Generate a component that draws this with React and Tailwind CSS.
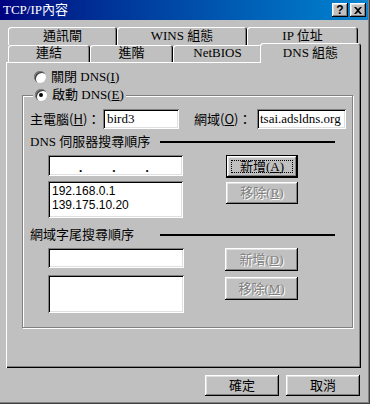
import React from 'react'

const raised = 'shadow-[inset_-1px_-1px_#000,inset_1px_1px_#fff,inset_-2px_-2px_#808080,inset_2px_2px_#dfdfdf]'
const sunken = 'shadow-[inset_1px_1px_#808080,inset_-1px_-1px_#fff,inset_2px_2px_#000,inset_-2px_-2px_#dfdfdf]'
const tabShadow = 'shadow-[inset_1px_1px_#fff,inset_-1px_0_#000,inset_-2px_0_#808080]'

function Tab({ w, children }) {
  return (
    <div className={`h-[17px] ${w} ${tabShadow} rounded-t-[3px] flex items-center justify-center pb-[1px]`}>
      {children}
    </div>
  )
}

function Radio({ checked }) {
  return (
    <div className="w-[12px] h-[12px] rounded-full bg-white shadow-[inset_1px_1px_#808080,inset_2px_2px_#404040] flex items-center justify-center">
      {checked && <div className="w-[4px] h-[4px] rounded-full bg-black" />}
    </div>
  )
}

function Btn({ children, disabled, isDefault, className = '' }) {
  if (isDefault) {
    return (
      <div className={`border border-black ${className}`}>
        <div className={`h-full ${raised} flex items-center justify-center p-[4px]`}>
          <div className="w-full h-full border border-dotted border-black flex items-center justify-center">
            {children}
          </div>
        </div>
      </div>
    )
  }
  return (
    <div
      className={`${raised} flex items-center justify-center ${
        disabled ? 'text-[#808080] [text-shadow:1px_1px_#fff]' : 'text-black'
      } ${className}`}
    >
      {children}
    </div>
  )
}

function SectionHeading({ children }) {
  return (
    <div className="flex items-center h-[14px] pl-[7px]">
      <span className="w-[130px]">{children}</span>
      <div className="w-[175px] h-[2px] bg-black" />
    </div>
  )
}

export default function App() {
  return (
    <div className="w-[370px] h-[404px] bg-[#c0c0c0] font-['Liberation_Serif','Noto_Sans_CJK_TC',serif] text-[13px] leading-[14px] text-black shadow-[inset_-1px_-1px_#404040,inset_-2px_-2px_#808080] overflow-hidden">
      {/* title bar */}
      <div className="w-[368px] h-[20px] bg-gradient-to-r from-[#000080] to-[#1084d0] flex items-center justify-between pl-[3px] pr-[2px]">
        <span className="text-white">TCP/IP內容</span>
        <div className="flex gap-[2px]">
          <div className={`w-[16px] h-[14px] bg-[#c0c0c0] ${raised} flex items-center justify-center font-['Liberation_Sans',sans-serif] font-bold text-[12px]`}>?</div>
          <div className={`w-[16px] h-[14px] bg-[#c0c0c0] ${raised} flex items-center justify-center`}>
            <svg width="8" height="7" viewBox="0 0 8 7">
              <path d="M0 0h2l2 2 2-2h2L5 3.5 8 7H6L4 5 2 7H0l3-3.5z" fill="#000" />
            </svg>
          </div>
        </div>
      </div>

      {/* tabs */}
      <div className="pl-[8px] mt-[7px]">
        <div className="flex">
          <Tab w="w-[109px] h-[18px]">通訊閘</Tab>
          <Tab w="w-[130px] h-[18px]">WINS 組態</Tab>
          <Tab w="w-[111px] h-[18px]">IP 位址</Tab>
        </div>
        <div className="flex items-start h-[17px]">
          <Tab w="w-[82px]">連結</Tab>
          <Tab w="w-[83px]">進階</Tab>
          <Tab w="w-[89px]">NetBIOS</Tab>
          <div className={`relative z-10 -ml-[2px] -mt-[2px] w-[101px] h-[20px] bg-[#c0c0c0] rounded-t-[3px] ${tabShadow} flex justify-center pt-[3px]`}>
            DNS 組態
          </div>
        </div>
      </div>

      {/* panel */}
      <div className="ml-[6px] w-[355px] h-[306px] shadow-[inset_1px_1px_#fff,inset_-1px_-1px_#000,inset_-2px_-2px_#808080] pt-[8px]">
        <div className="flex items-center gap-[5px] ml-[28px] h-[14px]">
          <Radio />
          <span>關閉 DNS(<u>I</u>)</span>
        </div>

        <div className="ml-[16px] mt-[11px] w-[331px] h-[233px] border border-[#808080] shadow-[inset_1px_1px_#fff,1px_1px_#fff]">
          <div className="flex items-center gap-[5px] -mt-[8px] ml-[10px] px-[2px] w-fit h-[14px] bg-[#c0c0c0]">
            <Radio checked />
            <span>啟動 DNS(<u>E</u>)</span>
          </div>

          <div className="flex items-center mt-[7px] pl-[7px]">
            <span className="w-[73px] font-['Noto_Sans_CJK_TC',sans-serif]">主電腦(<u>H</u>)：</span>
            <div className={`w-[76px] h-[20px] bg-white ${sunken} flex items-center pl-[4px]`}>bird3</div>
            <span className="ml-[15px] w-[63px] font-['Noto_Sans_CJK_TC',sans-serif]">網域(<u>O</u>)：</span>
            <div className={`w-[89px] h-[20px] bg-white ${sunken} flex items-center pl-[3px]`}>tsai.adsldns.org</div>
          </div>

          <div className="mt-[6px]">
            <SectionHeading>DNS 伺服器搜尋順序</SectionHeading>
          </div>

          <div className="flex mt-[6px] ml-[25px]">
            <div className="flex flex-col gap-[5px]">
              <div className={`w-[135px] h-[21px] bg-white ${sunken} flex items-end pb-[3px] pl-[31px] gap-[30px] font-bold leading-[10px]`}>
                <span>.</span>
                <span>.</span>
                <span>.</span>
              </div>
              <div className={`w-[135px] h-[37px] bg-white ${sunken} pl-[4px] pt-[3px] font-['Liberation_Sans',sans-serif] text-[12px] leading-[14px]`}>
                <div>192.168.0.1</div>
                <div>139.175.10.20</div>
              </div>
            </div>
            <div className="flex flex-col gap-[4px] ml-[43px]">
              <Btn isDefault className="w-[72px] h-[23px]">新增(<u>A</u>)</Btn>
              <Btn disabled className="w-[72px] h-[22px]">移除(<u>R</u>)</Btn>
            </div>
          </div>

          <div className="mt-[10px]">
            <SectionHeading>網域字尾搜尋順序</SectionHeading>
          </div>

          <div className="flex mt-[6px] ml-[25px]">
            <div className="flex flex-col gap-[7px]">
              <div className={`w-[136px] h-[20px] bg-white ${sunken}`} />
              <div className={`w-[136px] h-[38px] bg-white ${sunken}`} />
            </div>
            <div className="flex flex-col gap-[6px] ml-[41px]">
              <Btn disabled className="w-[73px] h-[23px]">新增(<u>D</u>)</Btn>
              <Btn disabled className="w-[73px] h-[23px]">移除(<u>M</u>)</Btn>
            </div>
          </div>
        </div>
      </div>

      {/* footer buttons */}
      <div className="flex justify-end gap-[7px] pr-[10px] mt-[7px]">
        <Btn className="w-[74px] h-[21px]">確定</Btn>
        <Btn className="w-[74px] h-[21px]">取消</Btn>
      </div>
    </div>
  )
}
